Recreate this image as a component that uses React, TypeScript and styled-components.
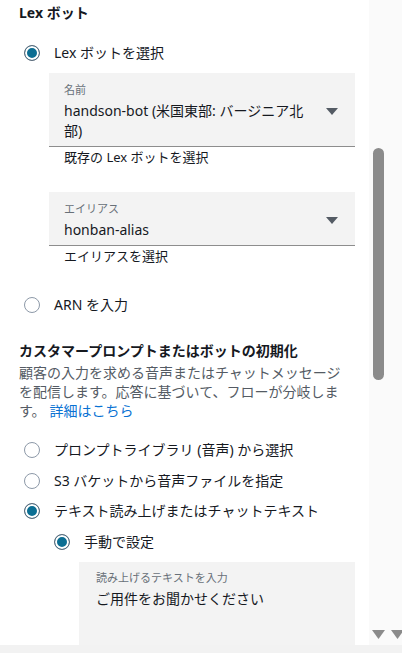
import { FC } from "react";
import styled, { createGlobalStyle } from "styled-components";

const GlobalStyle = createGlobalStyle`
  html, body {
    margin: 0;
    padding: 0;
    background: #ffffff;
  }
  body {
    font-family: "Noto Sans", "Noto Sans CJK JP", sans-serif;
    color: #16191f;
  }
`;

const Frame = styled.div`
  width: 402px;
  height: 653px;
  display: flex;
  flex-direction: column;
  overflow: hidden;
`;

const Body = styled.div`
  display: flex;
  height: 645px;
`;

const Content = styled.div`
  width: 369px;
  flex-shrink: 0;
  padding-left: 19px;
  box-sizing: border-box;
  overflow: hidden;
  background: #ffffff;
`;

const Track = styled.div`
  flex: 1;
  background: #fafafa;
  display: flex;
  flex-direction: column;
  padding-left: 4px;
`;

const Thumb = styled.div`
  width: 11px;
  height: 232px;
  margin-top: 148px;
  background: #8b8b8b;
  border-radius: 6px;
`;

const Arrows = styled.div`
  margin-top: auto;
  margin-bottom: 6px;
  display: flex;
  gap: 6px;
  margin-left: -1px;
`;

const BottomBar = styled.div`
  height: 8px;
  background: #f2f2f2;
`;

const Heading = styled.h3<{ top: number }>`
  margin: ${(p) => p.top}px 0 0;
  font-size: 14px;
  line-height: 20px;
  font-weight: 700;
  color: #16191f;
`;

const RadioRow = styled.label<{ top: number; indent?: number }>`
  display: flex;
  align-items: center;
  gap: 14px;
  margin-top: ${(p) => p.top}px;
  margin-left: ${(p) => 5 + (p.indent || 0)}px;
  font-size: 14px;
  line-height: 22px;
  color: #16191f;
`;

const Radio = styled.span<{ checked?: boolean }>`
  width: 16px;
  height: 16px;
  border-radius: 50%;
  box-sizing: border-box;
  border: 1px solid ${(p) => (p.checked ? "#5f6b7a" : "#8d99a8")};
  background: ${(p) => (p.checked ? "#0b6e93" : "#ffffff")};
  box-shadow: ${(p) => (p.checked ? "inset 0 0 0 2px #ffffff" : "none")};
  flex-shrink: 0;
`;

const Field = styled.div<{ top: number; left: number; width: number }>`
  margin-top: ${(p) => p.top}px;
  margin-left: ${(p) => p.left}px;
  width: ${(p) => p.width}px;
  background: #f3f3f3;
  display: flex;
  align-items: center;
`;

const SelectField = styled(Field)`
  padding: 9px 17px 5px 15px;
  border-bottom: 1px solid #8d8d8d;
  box-sizing: border-box;
`;

const TextField = styled(Field)`
  padding: 8px 17px 36px 17px;
  box-sizing: border-box;
  align-items: flex-start;
`;

const FieldText = styled.div`
  flex: 1;
  min-width: 0;
`;

const FieldLabel = styled.div`
  font-size: 11px;
  line-height: 16px;
  color: #687078;
  margin-bottom: 3px;
`;

const FieldValue = styled.div`
  font-size: 14px;
  line-height: 20px;
  color: #16191f;
`;

const Caret = styled.svg`
  flex-shrink: 0;
  margin-left: 12px;
`;

const Hint = styled.div`
  margin-left: 45px;
  font-size: 13px;
  line-height: 20px;
  color: #16191f;
`;

const Description = styled.p`
  margin: 2px 0 0;
  width: 330px;
  font-size: 14px;
  line-height: 19px;
  color: #545b64;
`;

const Link = styled.a`
  color: #0972d3;
  text-decoration: none;
  margin-left: 4px;
`;

const SelectBox: FC<{ top: number; label: string; value: string }> = ({
  top,
  label,
  value,
}) => (
  <SelectField top={top} left={30} width={306}>
    <FieldText>
      <FieldLabel>{label}</FieldLabel>
      <FieldValue>{value}</FieldValue>
    </FieldText>
    <Caret width="12" height="7" viewBox="0 0 12 7">
      <path d="M0 0h12L6 7z" fill="#545b64" />
    </Caret>
  </SelectField>
);

const ScrollArrow: FC = () => (
  <svg width="13" height="9" viewBox="0 0 13 9">
    <path d="M0 0h13L6.5 9z" fill="#8b8b8b" />
  </svg>
);

export default function App() {
  return (
    <>
      <GlobalStyle />
      <Frame>
        <Body>
          <Content>
            <Heading top={3}>Lex ボット</Heading>
            <RadioRow top={19}>
              <Radio checked />
              Lex ボットを選択
            </RadioRow>
            <SelectBox
              top={9}
              label="名前"
              value="handson-bot (米国東部: バージニア北部)"
            />
            <Hint>既存の Lex ボットを選択</Hint>
            <SelectBox top={25} label="エイリアス" value="honban-alias" />
            <Hint>エイリアスを選択</Hint>
            <RadioRow top={28}>
              <Radio />
              ARN を入力
            </RadioRow>
            <Heading top={25}>カスタマープロンプトまたはボットの初期化</Heading>
            <Description>
              顧客の入力を求める音声またはチャットメッセージを配信します。応答に基づいて、フローが分岐します。
              <Link href="#">詳細はこちら</Link>
            </Description>
            <RadioRow top={19}>
              <Radio />
              プロンプトライブラリ (音声) から選択
            </RadioRow>
            <RadioRow top={9}>
              <Radio />
              S3 バケットから音声ファイルを指定
            </RadioRow>
            <RadioRow top={8}>
              <Radio checked />
              テキスト読み上げまたはチャットテキスト
            </RadioRow>
            <RadioRow top={9} indent={30}>
              <Radio checked />
              手動で設定
            </RadioRow>
            <TextField top={9} left={60} width={276}>
              <FieldText>
                <FieldLabel>読み上げるテキストを入力</FieldLabel>
                <FieldValue>ご用件をお聞かせください</FieldValue>
              </FieldText>
            </TextField>
          </Content>
          <Track>
            <Thumb />
            <Arrows>
              <ScrollArrow />
              <ScrollArrow />
            </Arrows>
          </Track>
        </Body>
        <BottomBar />
      </Frame>
    </>
  );
}
